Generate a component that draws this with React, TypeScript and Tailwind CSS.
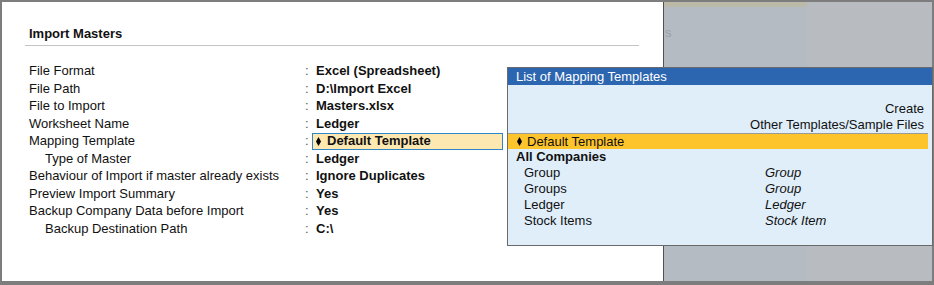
import React from 'react';

interface Row {
  label: string;
  value: string;
  indent?: boolean;
  active?: boolean;
}

const rows: Row[] = [
  { label: 'File Format', value: 'Excel (Spreadsheet)' },
  { label: 'File Path', value: 'D:\\Import Excel' },
  { label: 'File to Import', value: 'Masters.xlsx' },
  { label: 'Worksheet Name', value: 'Ledger' },
  { label: 'Mapping Template', value: 'Default Template', active: true },
  { label: 'Type of Master', value: 'Ledger', indent: true },
  { label: 'Behaviour of Import if master already exists', value: 'Ignore Duplicates' },
  { label: 'Preview Import Summary', value: 'Yes' },
  { label: 'Backup Company Data before Import', value: 'Yes' },
  { label: 'Backup Destination Path', value: 'C:\\', indent: true },
];

const templates = [
  { name: 'Group', type: 'Group' },
  { name: 'Groups', type: 'Group' },
  { name: 'Ledger', type: 'Ledger' },
  { name: 'Stock Items', type: 'Stock Item' },
];

const Diamond: React.FC = () => (
  <svg width="5" height="9" viewBox="0 0 5 9" className="shrink-0">
    <polygon points="2.5,0 5,4.5 2.5,9 0,4.5" fill="#000" />
  </svg>
);

const FieldRow: React.FC<{ row: Row }> = ({ row }) => (
  <div className="flex h-[17.5px] items-center leading-[16px]">
    <div className={`w-[280px] ${row.indent ? 'pl-[20px]' : 'pl-[4px]'}`}>{row.label}</div>
    <div className="w-[7px] text-[#555]">:</div>
    {row.active ? (
      <div className="flex h-[17px] w-[191px] items-center gap-[6px] border border-[#2f86c6] bg-[#fde8b1] pl-[3px] font-bold">
        <Diamond />
        <span>{row.value}</span>
      </div>
    ) : (
      <div className="pl-[4px] font-bold">{row.value}</div>
    )}
  </div>
);

const TemplatePopup: React.FC = () => (
  <div className="absolute left-[505px] top-[65px] h-[179px] w-[426px] border border-[#6a6a6a] bg-[#e0eefa] text-[13px] text-[#111]">
    <div className="h-[17px] bg-[#2c65b0] pl-[8px] leading-[17px] text-white">List of Mapping Templates</div>
    <div className="pr-[4px] pt-[16px]">
      <div className="pr-[4px] text-right leading-[16px]">Create</div>
      <div className="pr-[4px] text-right leading-[16px]">Other Templates/Sample Files</div>
      <div className="flex h-[16px] items-center gap-[5px] border-t border-[#9a9a9a] bg-[#fec42c] pl-[9px] leading-[15px]">
        <Diamond />
        <span>Default Template</span>
      </div>
      <div className="pl-[8px] font-bold leading-[16px]">All Companies</div>
      {templates.map((t) => (
        <div key={t.name} className="flex pl-[16px] leading-[16px]">
          <span className="w-[241px]">{t.name}</span>
          <span className="italic">{t.type}</span>
        </div>
      ))}
    </div>
  </div>
);

export default function App() {
  return (
    <div
      className="relative h-[285px] w-[934px] border-x-2 border-t-2 border-b-4 border-[#7d7d7d] text-[13px] text-[#111]"
      style={{ fontFamily: '"Liberation Sans", Arial, sans-serif' }}
    >
      <div className="flex h-full">
        <div className="w-[662px] border-r border-[#505050] bg-white pt-[24px]">
          <div className="ml-[23px] w-[614px]">
            <div className="border-b border-[#c4c4c4] pb-[3px] pl-[4px] font-bold leading-[16px]">Import Masters</div>
            <div className="mt-[16.5px]">
              {rows.map((r) => (
                <FieldRow key={r.label} row={r} />
              ))}
            </div>
          </div>
        </div>
        <div className="flex flex-1">
          <div className="w-[143px] bg-[#b4bbc2]">
            <div className="h-[5px] bg-[#bbb9a7]" />
            <div className="mt-[18px] pl-[1px] leading-[16px] text-[#9ba1a7]">s</div>
          </div>
          <div className="flex-1 bg-[#b8bcc0]" />
        </div>
      </div>
      <TemplatePopup />
    </div>
  );
}
